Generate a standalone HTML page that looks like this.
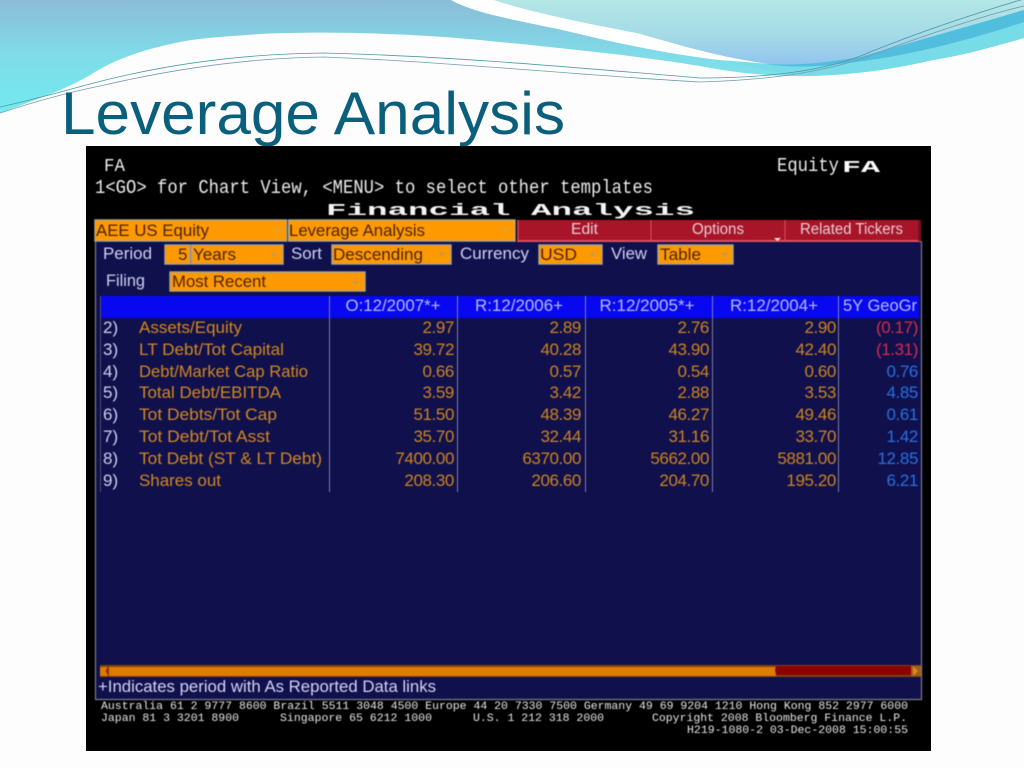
<!DOCTYPE html>
<html><head><meta charset="utf-8"><style>
html,body{margin:0;padding:0;background:#fff;overflow:hidden}
svg{display:block}
.s{font-family:"Liberation Sans",sans-serif;font-size:17px}
.m{font-family:"Liberation Mono",monospace}
.w{fill:#d0d0f0}
.o{fill:#d08820}
.d{fill:#4a2408}
.n{text-anchor:end;fill:#cc8420;letter-spacing:-.4px}
.h{fill:#b4bcf8;text-anchor:middle}
.f{font-family:"Liberation Mono",monospace;font-size:11px;fill:#e8e8e8}
</style></head><body>
<svg width="1024" height="768" viewBox="0 0 1024 768" xmlns="http://www.w3.org/2000/svg">
<defs>
<linearGradient id="a" x1="0" y1="0" x2="0" y2="1"><stop offset="0" stop-color="#8bbcd8"/><stop offset=".5" stop-color="#7fdce8"/><stop offset="1" stop-color="#72eaf0"/></linearGradient>
<linearGradient id="b" x1="0" y1="0" x2="0" y2="1"><stop offset="0" stop-color="#b4e6e6"/><stop offset=".55" stop-color="#a4dbe6"/><stop offset="1" stop-color="#92c4ee"/></linearGradient>
<filter id="t" x="-2%" y="-5%" width="104%" height="110%" color-interpolation-filters="sRGB"><feGaussianBlur stdDeviation="0.4"/></filter>
</defs>
<rect width="1024" height="768" fill="#fdfdfd"/>
<!-- background waves -->
<path d="M0 0H1024V38C990 48 960 56 933 60C890 70 850 75 810 76C770 77 730 72 700 66C640 56 560 48 480 40C410 33 320 31 260 34C220 37 200 38 180 42C140 50 115 60 95 72C70 88 35 100 0 113Z" fill="url(#a)"/>
<path d="M451 0C480 16 530 22 575 33C620 44 670 54 719 60C750 66 780 74 810 76C850 75 890 70 933 60C960 56 990 48 1024 38V0Z" fill="#78dbe8"/>
<path d="M494 0C530 12 590 24 637 33C670 42 720 58 771 64L719 60C670 54 620 44 575 33C530 22 480 16 451 0Z" fill="#fff"/>
<path d="M494 0C530 12 590 24 637 33C670 42 720 58 771 64C800 66 830 62 860 57L1024 10V0Z" fill="url(#b)"/>
<path d="M765 64C800 66 830 62 860 57C920 40 970 26 1024 10V22C970 40 910 56 847 63C820 67 790 68 765 64Z" fill="#52bede"/>
<path d="M0 107C40 98 60 92 90 84C150 68 230 54 324 53C450 56 580 68 700 78C770 78 830 70 870 52C930 28 980 12 1024 -1" fill="none" stroke="#4c9aa8" stroke-width=".8"/>
<path d="M0 113C40 100 70 92 100 86C160 72 240 58 324 57C450 62 590 76 700 82C770 80 830 72 880 52C940 30 990 14 1024 6" fill="none" stroke="#789ab0" stroke-width=".8"/>
<!-- title -->
<text x="61" y="134" font-family="Liberation Sans,sans-serif" font-size="60" fill="#0a607c" textLength="504" lengthAdjust="spacingAndGlyphs">Leverage Analysis</text>
<!-- terminal -->
<rect x="86" y="146" width="845" height="605" fill="#000"/>
<g filter="url(#t)">
<rect x="95" y="241" width="827" height="459" fill="#10104c"/>
<path d="M95.500 241V699.500H921.500V241" fill="none" stroke="#7a7a8c" stroke-width="1.200"/>
<g class="m" fill="#ececec" font-size="19">
<text x="104" y="171" font-size="18" textLength="21" lengthAdjust="spacingAndGlyphs">FA</text>
<text x="95" y="193" textLength="558" lengthAdjust="spacingAndGlyphs">1&lt;GO&gt; for Chart View, &lt;MENU&gt; to select other templates</text>
<text x="777" y="171" textLength="62" lengthAdjust="spacingAndGlyphs">Equity</text>
<text x="842" y="172" font-weight="bold" font-size="17" textLength="38" lengthAdjust="spacingAndGlyphs" fill="#fff">FA</text>
<text x="326" y="215" font-weight="bold" font-size="17" textLength="369" lengthAdjust="spacingAndGlyphs" fill="#f4f4f4">Financial Analysis</text>
</g>
<!-- top dropdowns -->
<rect x="95" y="220" width="191.500" height="21" fill="#ff9900" stroke="#b0a890" stroke-width="1.400"/>
<rect x="288.500" y="220" width="226.500" height="21" fill="#ff9900" stroke="#b0a890" stroke-width="1.400"/>
<path d="M275 229h7l-3.500 4z M502 229h7l-3.500 4z" fill="#d8a050"/>
<text class="s d" x="96" y="236" textLength="113" lengthAdjust="spacingAndGlyphs">AEE US Equity</text>
<text class="s d" x="289" y="236" textLength="136" lengthAdjust="spacingAndGlyphs">Leverage Analysis</text>
<rect x="517" y="220" width="404" height="21" fill="#a81428"/>
<rect x="517" y="240" width="404" height="2" fill="#d85060"/>
<path d="M518 220v21M651 220v21M785 220v21" stroke="#d85060" stroke-width="1"/>
<rect x="918" y="220" width="3" height="21" fill="#7a1020"/>
<g class="s" fill="#e8ccd4">
<text x="571" y="234" textLength="27" lengthAdjust="spacingAndGlyphs" style="font-size:15.500px">Edit</text>
<text x="692" y="234" textLength="52" lengthAdjust="spacingAndGlyphs" style="font-size:15.500px">Options</text>
<text x="800" y="234" textLength="103" lengthAdjust="spacingAndGlyphs" style="font-size:15.500px">Related Tickers</text>
</g>
<path d="M774 238h7l-3.500 3z" fill="#eee"/>
<!-- second row -->
<g class="s w">
<text x="103" y="259" textLength="49" lengthAdjust="spacingAndGlyphs">Period</text>
<text x="291" y="259" textLength="31" lengthAdjust="spacingAndGlyphs">Sort</text>
<text x="460" y="259" textLength="69" lengthAdjust="spacingAndGlyphs">Currency</text>
<text x="611" y="259" textLength="36" lengthAdjust="spacingAndGlyphs">View</text>
<text x="106" y="286" textLength="39" lengthAdjust="spacingAndGlyphs">Filing</text>
</g>
<g fill="#ff9900" stroke="#a8a498" stroke-width="1.400">
<rect x="165" y="245" width="25" height="19"/>
<rect x="191.500" y="245" width="91.500" height="19"/>
<rect x="332" y="245" width="119" height="19"/>
<rect x="539" y="245" width="63" height="19"/>
<rect x="658" y="245" width="75" height="19"/>
<rect x="170" y="272" width="195" height="19"/>
</g>
<path d="M270 253h7l-3.500 4zM438 253h7l-3.500 4zM589 253h7l-3.500 4zM721 253h7l-3.500 4zM352 281h7l-3.500 4z" fill="#c89858"/>
<g class="s d">
<text x="178" y="260">5</text>
<text x="193" y="260" textLength="43" lengthAdjust="spacingAndGlyphs">Years</text>
<text x="333" y="260" textLength="90" lengthAdjust="spacingAndGlyphs">Descending</text>
<text x="540" y="260" textLength="37" lengthAdjust="spacingAndGlyphs">USD</text>
<text x="660" y="260" textLength="41" lengthAdjust="spacingAndGlyphs">Table</text>
<text x="172" y="287" textLength="94" lengthAdjust="spacingAndGlyphs">Most Recent</text>
</g>
<!-- table header -->
<rect x="101" y="296" width="818" height="22" fill="#0808f0"/>
<path d="M329.500 296V492M457.500 296V492M585.500 296V492M712.500 296V492M838.500 296V492" stroke="#8888b0" stroke-width=".9"/>
<path d="M100.500 296V492" stroke="#50506a" stroke-width="1"/>
<g class="s h">
<text x="393" y="311" textLength="95" lengthAdjust="spacingAndGlyphs">O:12/2007*+</text>
<text x="519" y="311" textLength="88" lengthAdjust="spacingAndGlyphs">R:12/2006+</text>
<text x="647" y="311" textLength="95" lengthAdjust="spacingAndGlyphs">R:12/2005*+</text>
<text x="774" y="311" textLength="88" lengthAdjust="spacingAndGlyphs">R:12/2004+</text>
<text x="880" y="311" textLength="74" lengthAdjust="spacingAndGlyphs">5Y GeoGr</text>
</g>
<!-- row numbers -->
<g class="s w">
<text x="103" y="333">2)</text><text x="103" y="355">3)</text><text x="103" y="377">4)</text><text x="103" y="398">5)</text><text x="103" y="420">6)</text><text x="103" y="442">7)</text><text x="103" y="464">8)</text><text x="103" y="486">9)</text>
</g>
<g class="s o">
<text x="139" y="333" textLength="103" lengthAdjust="spacingAndGlyphs">Assets/Equity</text>
<text x="139" y="355" textLength="145" lengthAdjust="spacingAndGlyphs">LT Debt/Tot Capital</text>
<text x="139" y="377" textLength="169" lengthAdjust="spacingAndGlyphs">Debt/Market Cap Ratio</text>
<text x="139" y="398" textLength="142" lengthAdjust="spacingAndGlyphs">Total Debt/EBITDA</text>
<text x="139" y="420" textLength="138" lengthAdjust="spacingAndGlyphs">Tot Debts/Tot Cap</text>
<text x="139" y="442" textLength="131" lengthAdjust="spacingAndGlyphs">Tot Debt/Tot Asst</text>
<text x="139" y="464" textLength="183" lengthAdjust="spacingAndGlyphs">Tot Debt (ST &amp; LT Debt)</text>
<text x="139" y="486" textLength="82" lengthAdjust="spacingAndGlyphs">Shares out</text>
</g>
<g class="s n">
<text x="454" y="333">2.97</text><text x="581" y="333">2.89</text><text x="709" y="333">2.76</text><text x="836" y="333">2.90</text>
<text x="454" y="355">39.72</text><text x="581" y="355">40.28</text><text x="709" y="355">43.90</text><text x="836" y="355">42.40</text>
<text x="454" y="377">0.66</text><text x="581" y="377">0.57</text><text x="709" y="377">0.54</text><text x="836" y="377">0.60</text>
<text x="454" y="398">3.59</text><text x="581" y="398">3.42</text><text x="709" y="398">2.88</text><text x="836" y="398">3.53</text>
<text x="454" y="420">51.50</text><text x="581" y="420">48.39</text><text x="709" y="420">46.27</text><text x="836" y="420">49.46</text>
<text x="454" y="442">35.70</text><text x="581" y="442">32.44</text><text x="709" y="442">31.16</text><text x="836" y="442">33.70</text>
<text x="454" y="464">7400.00</text><text x="581" y="464">6370.00</text><text x="709" y="464">5662.00</text><text x="836" y="464">5881.00</text>
<text x="454" y="486">208.30</text><text x="581" y="486">206.60</text><text x="709" y="486">204.70</text><text x="836" y="486">195.20</text>
</g>
<g class="s" text-anchor="end" letter-spacing="-.4">
<text x="918" y="333" fill="#d42c50">(0.17)</text>
<text x="918" y="355" fill="#d42c50">(1.31)</text>
<text x="918" y="377" fill="#2870e0">0.76</text>
<text x="918" y="398" fill="#2870e0">4.85</text>
<text x="918" y="420" fill="#2870e0">0.61</text>
<text x="918" y="442" fill="#2870e0">1.42</text>
<text x="918" y="464" fill="#2870e0">12.85</text>
<text x="918" y="486" fill="#2870e0">6.21</text>
</g>
<!-- scrollbar -->
<rect x="100" y="665" width="821" height="12" fill="#7a4410"/>
<rect x="100" y="667" width="676" height="9" fill="#dd7c00"/>
<path d="M776 666H911V675H776L775 670Z" fill="#8e0000"/>
<rect x="911" y="666" width="10" height="10" fill="#a06018"/>
<path d="M913 666l5 5-5 5" fill="#e08820"/>
<path d="M109 666l-3 5 3 5" fill="#8e3000" stroke="#8e3000"/>
<text class="s" x="98" y="692" fill="#d4d4f4" textLength="338" lengthAdjust="spacingAndGlyphs">+Indicates period with As Reported Data links</text>
<!-- footer -->
<text class="f" x="101" y="709" textLength="807" lengthAdjust="spacingAndGlyphs">Australia 61 2 9777 8600 Brazil 5511 3048 4500 Europe 44 20 7330 7500 Germany 49 69 9204 1210 Hong Kong 852 2977 6000</text>
<text class="f" x="101" y="721" textLength="138" lengthAdjust="spacingAndGlyphs">Japan 81 3 3201 8900</text>
<text class="f" x="280" y="721" textLength="152" lengthAdjust="spacingAndGlyphs">Singapore 65 6212 1000</text>
<text class="f" x="473" y="721" textLength="131" lengthAdjust="spacingAndGlyphs">U.S. 1 212 318 2000</text>
<text class="f" x="652" y="721" textLength="255" lengthAdjust="spacingAndGlyphs">Copyright 2008 Bloomberg Finance L.P.</text>
<text class="f" x="687" y="733" textLength="221" lengthAdjust="spacingAndGlyphs">H219-1080-2 03-Dec-2008 15:00:55</text>
</g>
</svg>
</body></html>
